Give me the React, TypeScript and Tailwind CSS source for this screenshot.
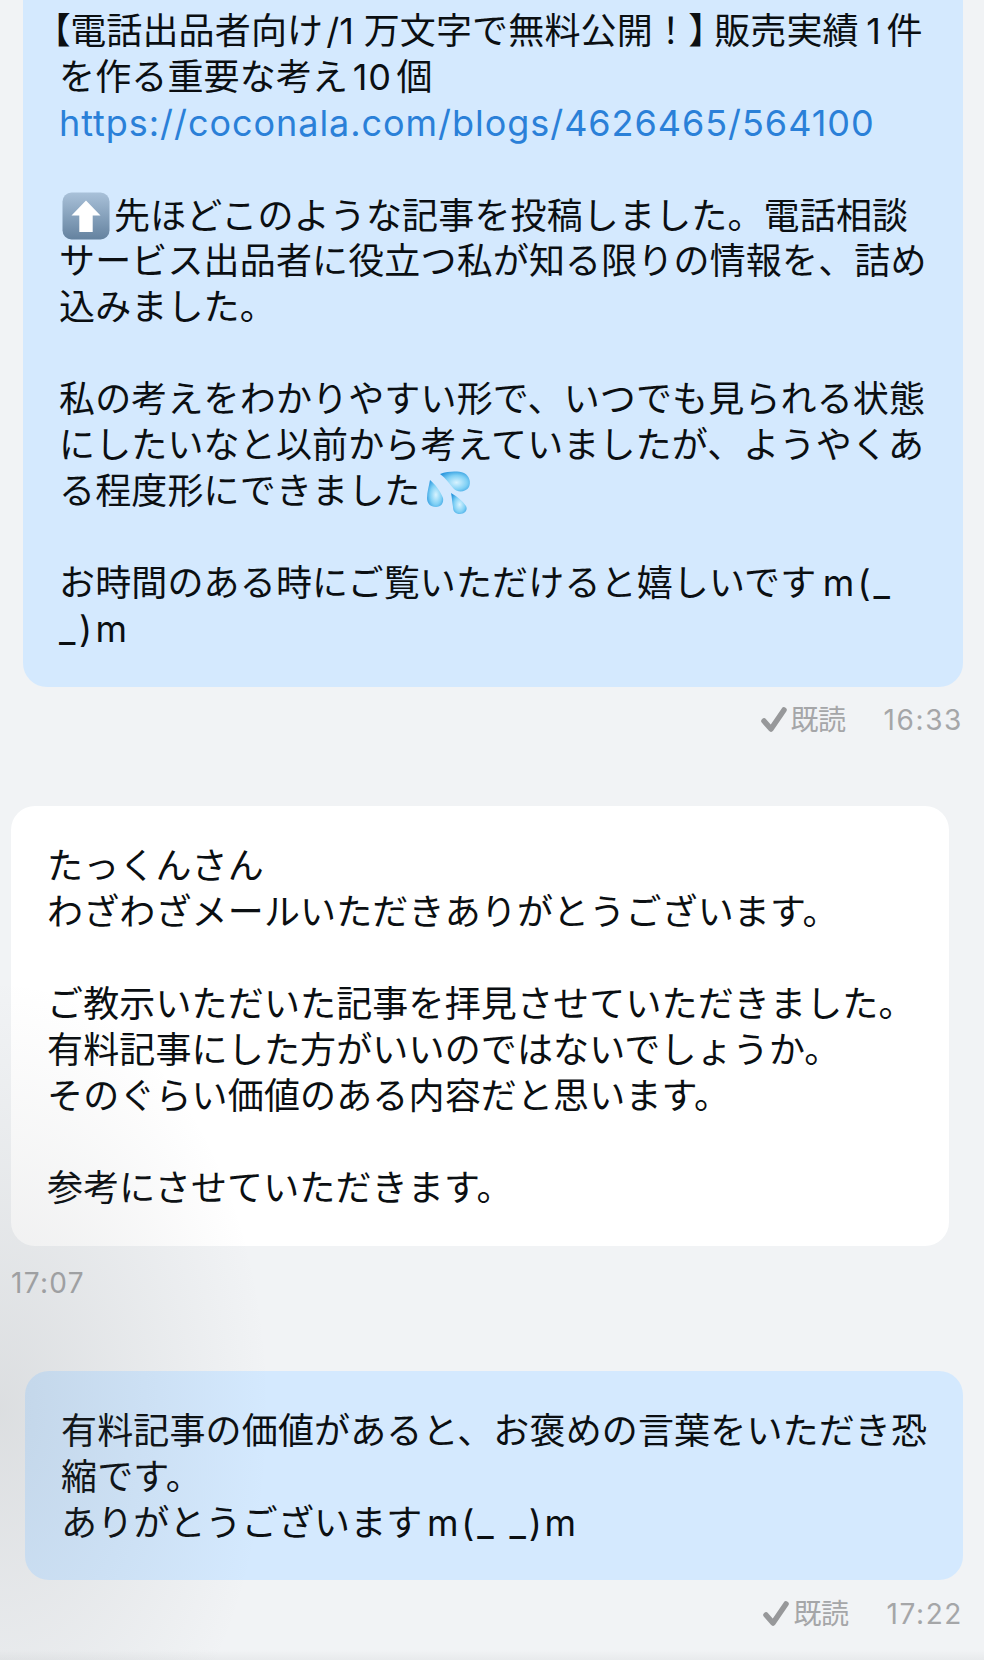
import type { ReactNode } from "react";

function UpArrowEmoji() {
  return (
    <svg viewBox="0 0 48 48" className="inline-block w-[48px] h-[48px] align-[-11px] ml-[3px] mr-[4px]">
      <defs>
        <linearGradient id="arrowBox" x1="0" y1="0" x2="0" y2="1">
          <stop offset="0" stopColor="#a9c1d9" />
          <stop offset="1" stopColor="#64829f" />
        </linearGradient>
      </defs>
      <rect x="0.5" y="0.5" width="47" height="47" rx="9" fill="url(#arrowBox)" />
      <path d="M24 8.5 L38.5 23.5 H30.7 V40 H17.3 V23.5 H9.5 Z" fill="#fff" />
    </svg>
  );
}

function SweatEmoji() {
  return (
    <svg viewBox="0 0 44 44" className="inline-block w-[44px] h-[44px] align-[-10px] ml-[6px]">
      <defs>
        <radialGradient id="drop" cx="0.55" cy="0.55" r="0.65">
          <stop offset="0" stopColor="#d8f3ff" />
          <stop offset="0.55" stopColor="#7fd0f5" />
          <stop offset="1" stopColor="#2594dc" />
        </radialGradient>
      </defs>
      <path d="M13 4 C22 1 31 1 37 3 C43 6 44 13 42 17 C39 22 31 23 27 19 C23 15 19 8 13 4 Z" fill="url(#drop)" />
      <path d="M3 10 C8 14 14 22 16 28 C17 33 14 37 9 37 C3 37 0 33 0 28 C0 22 2 16 3 10 Z" fill="url(#drop)" />
      <path d="M24 23 C29 26 36 31 39 36 C41 40 38 44 33 44 C28 44 26 41 26 37 C25 32 25 27 24 23 Z" fill="url(#drop)" />
    </svg>
  );
}

function ReadMark({ time }: { time: string }) {
  return (
    <div className="flex items-center justify-end text-[28px] leading-[40px] text-[#a5a6a8]">
      <svg viewBox="0 0 28 28" className="w-[28px] h-[28px] mr-[3px]">
        <path d="M4 15 L11 23 L24 4" fill="none" stroke="#97989a" strokeWidth="5.5" strokeLinecap="round" strokeLinejoin="round" />
      </svg>
      <span className="tracking-[-0.5px]">既読</span>
      <span className="ml-[38px] tracking-[1.6px]">{time}</span>
    </div>
  );
}

function Lines({ lines }: { lines: ReactNode[] }) {
  return (
    <>
      {lines.map((line, i) => (
        <div key={i} className="h-[46px] whitespace-nowrap">
          {line}
        </div>
      ))}
    </>
  );
}

export default function App() {
  return (
    <div className="relative w-[984px] h-[1660px] overflow-hidden bg-[#f1f3f5] text-[36px] leading-[46px] tracking-[0.15px] text-[#0b0f12] font-['Inter','Noto_Sans_CJK_JP',sans-serif] [text-autospace:normal]">
      {/* first sent bubble, cut off by the top of the shot */}
      <div className="ml-[23px] mr-[21px] pl-[36px] pt-[8px] pb-[35px] bg-[#d4e9fe] rounded-b-[24px]">
        <Lines
          lines={[
            <>
              <span className="-ml-[7px] [font-feature-settings:'palt']">【</span>電話出品者向け
              <span className="ml-[3px]">/1</span>
              <span className="ml-[5px]">万文字で無料公開！</span>
              <span className="mr-[7px] [font-feature-settings:'palt']">】</span>販売実績<span className="ml-[3px] tracking-[1px]">1</span>件
            </>,
            <>
              を作る重要な考え<span className="tracking-[1px]">10</span>個
            </>,
            <span className="text-[#2a80d8] tracking-[0.95px]">https://coconala.com/blogs/4626465/564100</span>,
            "",
            <>
              <UpArrowEmoji />
              先ほどこのような記事を投稿しました。電話相談
            </>,
            "サービス出品者に役立つ私が知る限りの情報を、詰め",
            "込みました。",
            "",
            "私の考えをわかりやすい形で、いつでも見られる状態",
            "にしたいなと以前から考えていましたが、ようやくあ",
            <>
              る程度形にできました
              <SweatEmoji />
            </>,
            "",
            <>
              お時間のある時にご覧いただけると嬉しいです<span className="ml-[2px] tracking-[3px]">m(_</span>
            </>,
            <span className="tracking-[3.5px]">_)m</span>,
          ]}
        />
      </div>
      <div className="mt-[13px] mr-[21px]">
        <ReadMark time="16:33" />
      </div>

      {/* received bubble */}
      <div className="mt-[66px] ml-[11px] mr-[35px] pl-[36px] pt-[37px] pb-[35px] bg-white rounded-[24px]">
        <Lines
          lines={[
            "たっくんさん",
            "わざわざメールいただきありがとうございます。",
            "",
            "ご教示いただいた記事を拝見させていただきました。",
            "有料記事にした方がいいのではないでしょうか。",
            "そのぐらい価値のある内容だと思います。",
            "",
            "参考にさせていただきます。",
          ]}
        />
      </div>
      <div className="mt-[17px] ml-[11px] text-[28px] leading-[40px] tracking-[1.3px] text-[#a5a6a8]">17:07</div>

      {/* last sent bubble */}
      <div className="mt-[68px] ml-[25px] mr-[21px] pl-[36px] pt-[37px] pb-[34px] bg-[#d4e9fe] rounded-[24px]">
        <Lines
          lines={[
            "有料記事の価値があると、お褒めの言葉をいただき恐",
            "縮です。",
            <>
              ありがとうございます<span className="tracking-[2.8px]">m(_ _)m</span>
            </>,
          ]}
        />
      </div>
      <div className="mt-[14px] mr-[21px]">
        <ReadMark time="17:22" />
      </div>

      {/* soft shadow the photo has on the lower left edge and along the bottom */}
      <div className="absolute inset-0 pointer-events-none bg-[radial-gradient(ellipse_270px_430px_at_0px_1410px,rgba(90,95,100,0.14),rgba(90,95,100,0)),linear-gradient(to_top,rgba(90,95,100,0.06),rgba(90,95,100,0)_10px)]" />
    </div>
  );
}
